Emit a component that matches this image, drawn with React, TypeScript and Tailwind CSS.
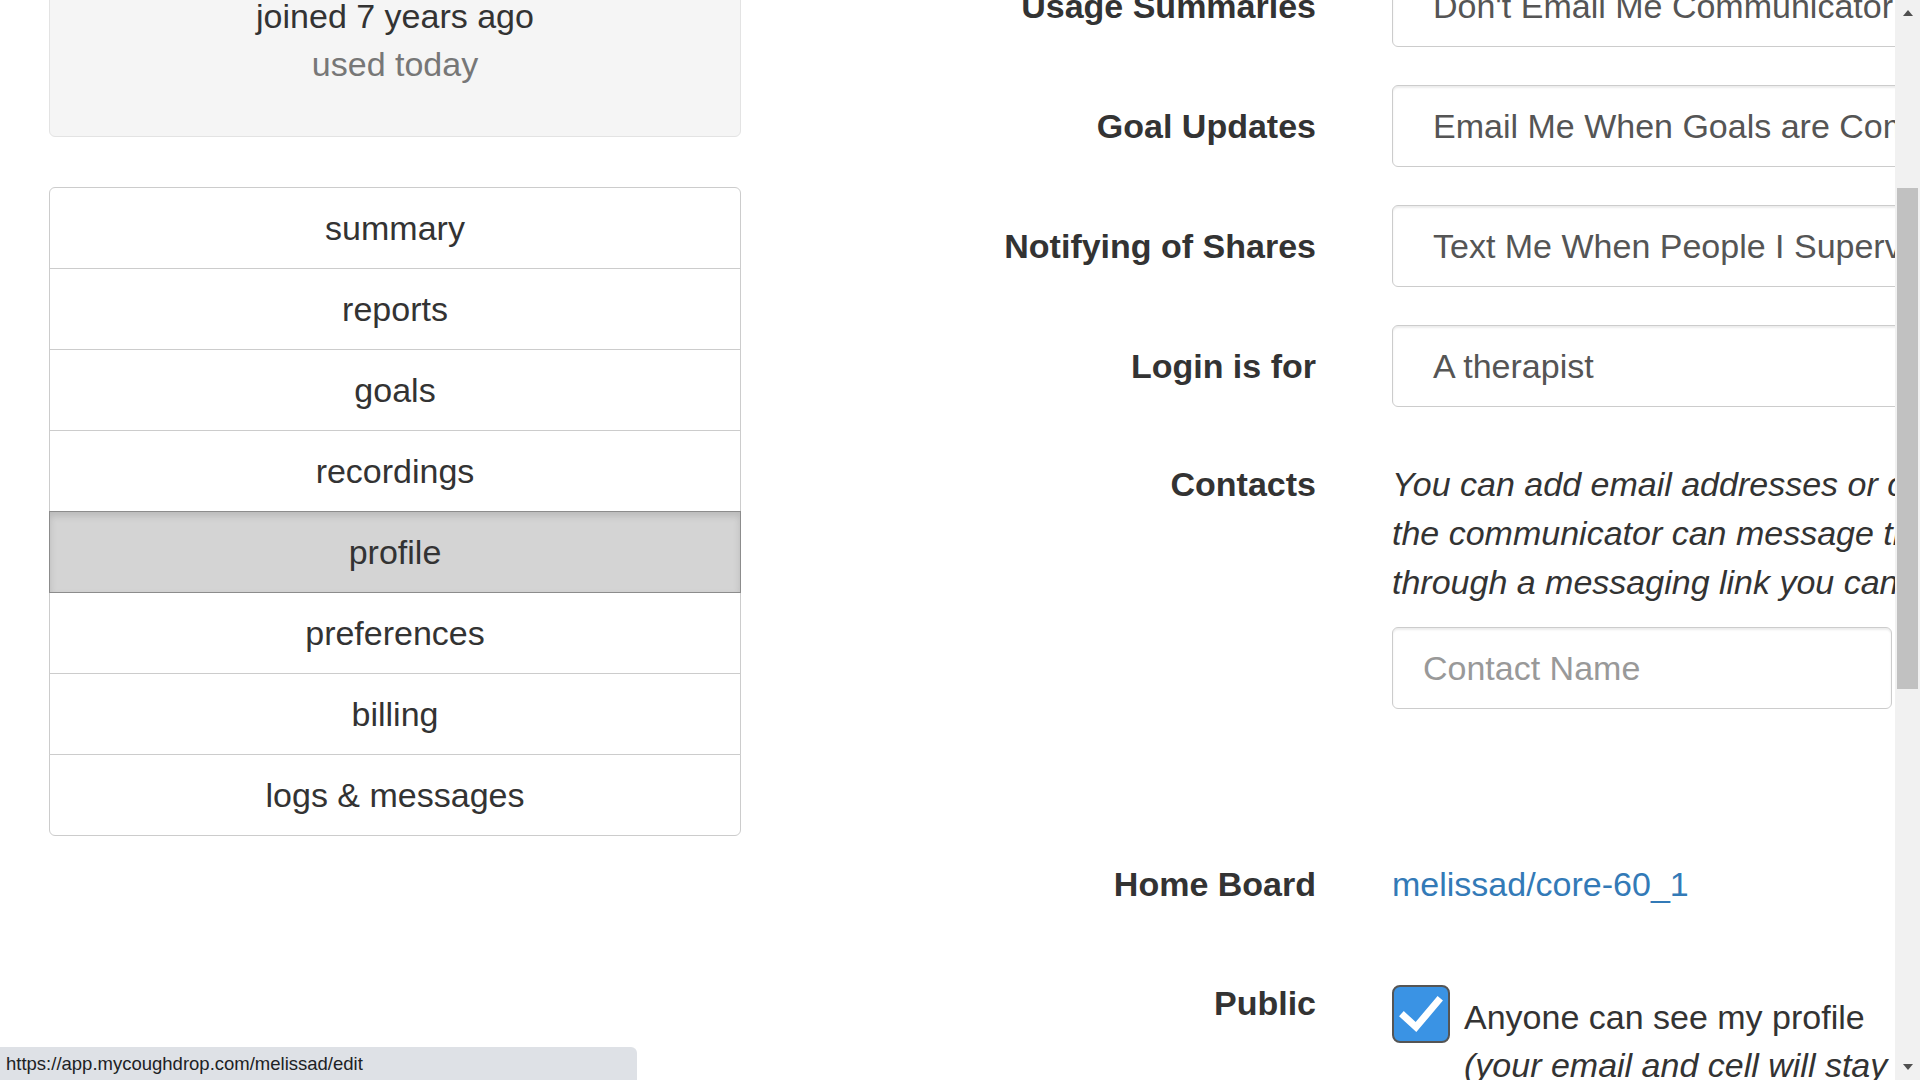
import React from "react";

const navItems = [
  "summary",
  "reports",
  "goals",
  "recordings",
  "profile",
  "preferences",
  "billing",
  "logs & messages",
];

function SelectBox({ text, className }: { text: string; className: string }) {
  return (
    <div
      className={
        "flex h-[82px] w-[700px] shrink-0 items-center whitespace-nowrap rounded-[6px] border border-[#ccc] bg-white pl-[40px] text-[34px] text-[#555] shadow-[inset_0_2px_2px_rgba(0,0,0,0.075)] " +
        className
      }
    >
      {text}
    </div>
  );
}

function Label({ children }: { children: React.ReactNode }) {
  return (
    <div className="w-[575px] shrink-0 text-right text-[34px] font-bold leading-[48px] text-[#333]">
      {children}
    </div>
  );
}

export default function App() {
  return (
    <div className="relative h-screen w-full overflow-hidden bg-white font-['Liberation_Sans',Arial,sans-serif] text-[#333]">
      <div className="flex">
        {/* left column */}
        <aside className="ml-[49px] w-[692px] shrink-0">
          <div className="-mt-[60px] rounded-[6px] border border-[#e3e3e3] bg-[#f5f5f5] pb-[48px] pt-[51px] text-center text-[34px] leading-[48px]">
            <div className="text-[#333]">joined 7 years ago</div>
            <div className="text-[#777]">used today</div>
          </div>

          <div className="mt-[50px] flex flex-col">
            {navItems.map((item, i) => {
              const active = item === "profile";
              const first = i === 0;
              const last = i === navItems.length - 1;
              return (
                <div
                  key={item}
                  className={
                    (first ? "rounded-t-[6px] " : "-mt-px ") +
                    (last ? "rounded-b-[6px] " : "") +
                    (active
                      ? "relative z-10 border-[#8c8c8c] bg-[#d4d4d4] shadow-[inset_0_4px_7px_rgba(0,0,0,0.125)] "
                      : "border-[#ccc] bg-white ") +
                    "flex h-[82px] items-center justify-center border text-[34px] leading-[48px] text-[#333]"
                  }
                >
                  {item}
                </div>
              );
            })}
          </div>
        </aside>

        {/* right column */}
        <main className="flex min-w-0 flex-1 flex-col">
          <div className="-mt-[35px] flex items-center">
            <Label>Usage Summaries</Label>
            <SelectBox className="ml-[76px]" text="Don't Email Me Communicator Usage Summaries" />
          </div>
          <div className="mt-[38px] flex items-center">
            <Label>Goal Updates</Label>
            <SelectBox className="ml-[76px]" text="Email Me When Goals are Completed" />
          </div>
          <div className="mt-[38px] flex items-center">
            <Label>Notifying of Shares</Label>
            <SelectBox className="ml-[76px]" text="Text Me When People I Supervise Share Messages" />
          </div>
          <div className="mt-[38px] flex items-center">
            <Label>Login is for</Label>
            <SelectBox className="ml-[76px]" text="A therapist" />
          </div>

          <div className="mt-[53px] flex items-start">
            <div className="w-[575px] shrink-0 text-right text-[34px] font-bold leading-[49px] text-[#333]">
              Contacts
            </div>
            <div className="ml-[76px] shrink-0">
              <div className="whitespace-nowrap text-[34px] italic leading-[49px] text-[#333]">
                <div>You can add email addresses or cell phone numbers that</div>
                <div>the communicator can message them, either directly or</div>
                <div>through a messaging link you can share with them.</div>
              </div>
              <div className="mt-[20px] flex h-[82px] w-[500px] items-center rounded-[6px] border border-[#ccc] bg-white pl-[30px] text-[34px] text-[#999] shadow-[inset_0_2px_2px_rgba(0,0,0,0.075)]">
                Contact Name
              </div>
            </div>
          </div>

          <div className="mt-[151px] flex items-center">
            <Label>Home Board</Label>
            <a className="ml-[76px] whitespace-nowrap text-[34px] leading-[48px] text-[#337ab7]" href="#">
              melissad/core-60_1
            </a>
          </div>

          <div className="mt-[71px] flex items-start">
            <Label>Public</Label>
            <div className="ml-[76px] flex shrink-0 items-start">
              <div className="mt-[6px] flex h-[58px] w-[58px] shrink-0 items-center justify-center rounded-[8px] border-[2px] border-[#555] bg-[#3a93e4]">
                <svg width="44" height="40" viewBox="0 0 44 40" fill="none">
                  <path d="M5 22 L17 33 L39 7" stroke="white" strokeWidth="7" strokeLinecap="square" strokeLinejoin="miter" />
                </svg>
              </div>
              <div className="ml-[14px] mt-[14px] whitespace-nowrap text-[34px] leading-[48px] text-[#333]">
                <div>Anyone can see my profile</div>
                <div className="italic">(your email and cell will stay private)</div>
              </div>
            </div>
          </div>
        </main>
      </div>

      {/* scrollbar */}
      <div className="absolute right-0 top-0 h-full w-[25px] bg-[#f1f1f1]">
        <div className="absolute left-[8px] top-[10px] h-0 w-0 border-x-[5px] border-b-[6px] border-x-transparent border-b-[#505050]" />
        <div className="absolute left-[2px] top-[188px] h-[501px] w-[21px] bg-[#c1c1c1]" />
        <div className="absolute bottom-[10px] left-[8px] h-0 w-0 border-x-[5px] border-t-[6px] border-x-transparent border-t-[#505050]" />
      </div>

      {/* status bubble */}
      <div className="absolute bottom-0 left-0 flex h-[33px] w-[637px] items-center rounded-tr-[6px] bg-[#dee1e6] pl-[6px] text-[18.5px] text-[#202124]">
        https://app.mycoughdrop.com/melissad/edit
      </div>
    </div>
  );
}
